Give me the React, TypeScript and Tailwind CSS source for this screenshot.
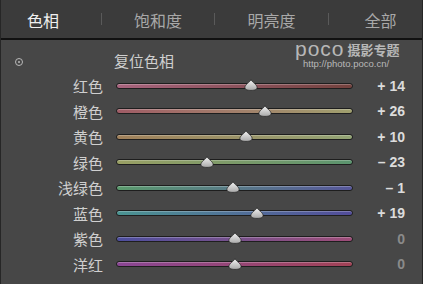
import React from 'react';

const sliders = [
  { label: '红色', value: 14, text: '+ 14', from: 'from-[#a8647e]', to: 'to-[#74423e]' },
  { label: '橙色', value: 26, text: '+ 26', from: 'from-[#a05c66]', to: 'to-[#a0a06e]' },
  { label: '黄色', value: 10, text: '+ 10', from: 'from-[#a0805a]', to: 'to-[#92a474]' },
  { label: '绿色', value: -23, text: '– 23', from: 'from-[#9aa064]', to: 'to-[#5a946e]' },
  { label: '浅绿色', value: -1, text: '– 1', from: 'from-[#5a9a6c]', to: 'to-[#56569a]' },
  { label: '蓝色', value: 19, text: '+ 19', from: 'from-[#4a9492]', to: 'to-[#524c9a]' },
  { label: '紫色', value: 0, text: '0', from: 'from-[#4c4e9e]', to: 'to-[#9e4c78]' },
  { label: '洋红', value: 0, text: '0', from: 'from-[#8a4694]', to: 'to-[#a24256]' },
];

const tabs = [
  { name: '色相', cls: 'w-[100px] pr-[16px] text-[#f0f0f0]' },
  { name: '饱和度', cls: 'w-[112px] text-[#a8a8a8]' },
  { name: '明亮度', cls: 'w-[113px] text-[#a8a8a8]' },
  { name: '全部', cls: 'flex-1 pl-[10px] text-[#a8a8a8]' },
];

function Thumb() {
  return (
    <svg width="15" height="12" viewBox="0 0 15 12">
      <defs>
        <linearGradient id="tg" x1="0" y1="0" x2="0" y2="1">
          <stop offset="0" stopColor="#f4f4f4" />
          <stop offset="1" stopColor="#a8a8a8" />
        </linearGradient>
      </defs>
      <path
        d="M7.5 0.8 C9 3.4 13.6 5.8 13.6 8.4 C13.6 10.4 11.4 11.4 7.5 11.4 C3.6 11.4 1.4 10.4 1.4 8.4 C1.4 5.8 6 3.4 7.5 0.8 Z"
        fill="url(#tg)"
        stroke="#2a2a2a"
        strokeWidth="0.8"
      />
    </svg>
  );
}

export default function App() {
  return (
    <div className="w-[428px] h-[287px] bg-white" style={{ fontFamily: '"Noto Sans CJK SC", "Noto Sans", sans-serif' }}>
      <div className="relative w-[423px] h-[284px] border-l border-r border-[#262626] flex flex-col overflow-hidden">
        {/* tabs */}
        <div className="h-[40px] bg-[#3b3b3b] flex items-center border-b-2 border-[#111]">
          {tabs.map((t, i) => (
            <React.Fragment key={t.name}>
              {i > 0 && <div className="w-px h-[12px] bg-[#5a5a5a]" />}
              <div className={`${t.cls} flex justify-center text-[16px] leading-none pt-[2px]`}>{t.name}</div>
            </React.Fragment>
          ))}
        </div>

        {/* body */}
        <div className="flex-1 bg-[#474747] pt-[7px]">
          <div className="h-[26px] flex items-center">
            <div className="w-[36px] flex justify-center pt-[4px]">
              <div className="w-[8px] h-[8px] rounded-full border-[1.5px] border-[#b8b8b8] flex items-center justify-center">
                <div className="w-[2px] h-[2px] rounded-full bg-[#b8b8b8]" />
              </div>
            </div>
            <div className="ml-[77px] text-[15px] leading-none text-[#cfcfcf]">复位色相</div>
          </div>

          {sliders.map((s) => (
            <div key={s.label} className="h-[25.5px] flex items-center">
              <div className="w-[102px] text-right text-[15px] leading-none text-[#cfcfcf]">{s.label}</div>
              <div className="relative ml-[13px] w-[237px] h-[6px]">
                <div className={`h-full rounded-full border border-[#1e1e1e] bg-linear-to-r ${s.from} ${s.to} shadow-[inset_0_1px_0_rgba(255,255,255,0.25)]`} />
                <div
                  className="absolute top-[-3.5px] -translate-x-1/2"
                  style={{ left: `${50 + s.value / 2}%` }}
                >
                  <Thumb />
                </div>
              </div>
              <div
                className={`w-[52px] text-right text-[14px] leading-none font-bold ${
                  s.value === 0 ? 'text-[#8a8a8a]' : 'text-[#dcdcdc]'
                }`}
                style={{ fontFamily: '"Liberation Sans", Arial, sans-serif' }}
              >
                {s.text}
              </div>
            </div>
          ))}
        </div>

        {/* watermark */}
        <div className="absolute left-[294px] top-[39px] text-[#c4c4c4] opacity-90">
          <div className="flex items-center gap-[3px] h-[20px]">
            <span className="text-[21px] leading-[20px] tracking-[1px]" style={{ fontFamily: '"Liberation Sans", sans-serif' }}>poco</span>
            <span className="text-[13px] leading-[14px] font-bold pt-[2px]">摄影专题</span>
          </div>
          <div className="text-[9.5px] leading-[10px] ml-[8px]" style={{ fontFamily: '"Liberation Sans", sans-serif' }}>
            http://photo.poco.cn/
          </div>
        </div>
      </div>
    </div>
  );
}
